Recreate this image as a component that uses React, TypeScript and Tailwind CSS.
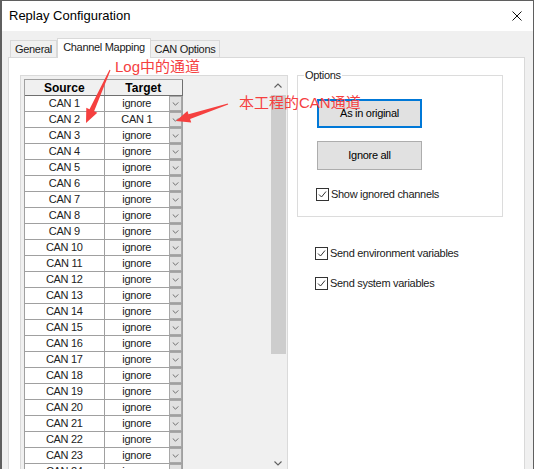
import React from "react";

const ui = { fontFamily: '"Liberation Sans", Arial, sans-serif' };
const cjk = { fontFamily: '"Liberation Sans", "Noto Sans CJK SC", sans-serif' };

const channels = Array.from({ length: 25 }, (_, i) => `CAN ${i + 1}`);

function Chevron({ up = false, className = "" }: { up?: boolean; className?: string }) {
  return (
    <svg viewBox="0 0 8 5" className={className} fill="none">
      <polyline
        points={up ? "0.5,4.5 4,1 7.5,4.5" : "0.5,0.5 4,4 7.5,0.5"}
        stroke="currentColor"
        strokeWidth="1.1"
      />
    </svg>
  );
}

function CheckBox({ label }: { label: string }) {
  return (
    <label className="flex items-center gap-[2px] text-[11px] leading-[13px] tracking-[-0.3px] text-[#1a1a1a]">
      <span className="w-[13px] h-[13px] border border-[#333] bg-white flex items-center justify-center">
        <svg viewBox="0 0 11 11" className="w-[11px] h-[11px]" fill="none">
          <polyline points="2,5.5 4.5,8 9,2.5" stroke="#333" strokeWidth="1" />
        </svg>
      </span>
      {label}
    </label>
  );
}

function Grid() {
  return (
    <div className="w-[159px] border-l border-t border-[#a0a0a0] text-[11px] tracking-[-0.3px] text-[#222]">
      <div className="flex h-[16px] bg-[#f0f0f0] font-bold text-[12px] tracking-normal text-black border-b border-[#6f6f6f]">
        <div className="w-[80px] flex items-center justify-center border-r border-[#a0a0a0]">Source</div>
        <div className="w-[79px] flex items-center justify-center border-r border-[#6f6f6f]">Target</div>
      </div>
      {channels.map((c, i) => (
        <div key={c} className="flex h-[16px] border-b border-[#a0a0a0] bg-white">
          <div className="w-[80px] flex items-center justify-center border-r border-[#a0a0a0]">{c}</div>
          <div className="w-[79px] flex items-center border-r border-[#a0a0a0]">
            <span className="flex-1 text-center">{i === 1 ? "CAN 1" : "ignore"}</span>
            <span className="w-[13px] h-[15px] bg-[#e1e1e1] border border-[#a8a8a8] flex items-center justify-center text-[#606060]">
              <Chevron className="w-[7px] h-[4px]" />
            </span>
          </div>
        </div>
      ))}
    </div>
  );
}

export default function App() {
  return (
    <div className="relative w-[535px] h-[469px] overflow-hidden bg-white" style={ui}>
      <div className="w-[534px] h-[469px] border-l-2 border-t border-r border-[#5f5f5f] flex flex-col bg-[#f0f0f0]">
        {/* title bar */}
        <div className="h-[30px] bg-white flex items-center justify-between pl-[7px] pr-[11px] shrink-0">
          <span className="text-[13px] text-black">Replay Configuration</span>
          <svg viewBox="0 0 10 10" className="w-[10px] h-[10px]" fill="none">
            <path d="M0.5 0.5 L9.5 9.5 M9.5 0.5 L0.5 9.5" stroke="#111" strokeWidth="1" />
          </svg>
        </div>

        {/* tabs */}
        <div className="flex items-end h-[26px] pl-[8px] shrink-0 text-[11px] tracking-[-0.3px] text-[#1a1a1a]">
          <div className="w-[47px] h-[17px] flex items-center justify-center border border-b-0 border-[#d9d9d9] bg-[#f0f0f0]">
            General
          </div>
          <div className="w-[94px] h-[20px] -mb-px flex items-center justify-center border border-b-0 border-[#d9d9d9] bg-white relative z-10 pb-[2px]">
            Channel Mapping
          </div>
          <div className="w-[69px] h-[17px] flex items-center justify-center border border-b-0 border-l-0 border-[#d9d9d9] bg-[#f0f0f0]">
            CAN Options
          </div>
        </div>

        {/* page */}
        <div className="ml-[6px] w-[517px] flex-1 bg-white border border-[#d9d9d9] flex pt-[17px] pl-[11px]">
          {/* channel list panel */}
          <div className="w-[268px] h-[400px] bg-[#f0f0f0] border border-[#dadada] flex justify-between pl-[3px] pt-[3px] pr-px shrink-0">
            <div className="overflow-hidden">
              <Grid />
            </div>
            <div className="w-[16px] -mt-[3px] flex flex-col items-center text-[#606060]">
              <div className="h-[19px] flex items-center justify-center">
                <Chevron up className="w-[8px] h-[5px]" />
              </div>
              <div className="w-[15px] h-[259px] bg-[#cdcdcd]" />
              <div className="flex-1" />
              <div className="h-[16px] flex items-start justify-center pt-[3px]">
                <Chevron className="w-[8px] h-[5px]" />
              </div>
            </div>
          </div>

          {/* right column */}
          <div className="ml-[9px] flex flex-col">
            <fieldset className="w-[206px] h-[148px] -mt-[6px] border border-[#dcdcdc]">
              <legend className="ml-[6px] px-px text-[11px] tracking-[-0.3px] leading-[13px] text-[#1a1a1a]">
                Options
              </legend>
              <div className="pl-[19px] flex flex-col items-start">
                <button className="mt-[17px] w-[105px] h-[29px] bg-[#e1e1e1] border-2 border-[#0078d7] text-[11px] tracking-[-0.3px] text-black">
                  As in original
                </button>
                <button className="mt-[13px] w-[105px] h-[29px] bg-[#e1e1e1] border border-[#adadad] text-[11px] tracking-[-0.3px] text-black">
                  Ignore all
                </button>
                <div className="mt-[18px] -ml-px">
                  <CheckBox label="Show ignored channels" />
                </div>
              </div>
            </fieldset>
            <div className="mt-[30px] pl-[18px] flex flex-col gap-[17px]">
              <CheckBox label="Send environment variables" />
              <CheckBox label="Send system variables" />
            </div>
          </div>
        </div>
      </div>

      {/* red annotations */}
      <span className="absolute left-[115px] top-[57px] text-[15px] text-[#f5403f] leading-[20px]" style={cjk}>
        Log中的通道
      </span>
      <span className="absolute left-[239px] top-[93px] text-[15px] text-[#f5403f] leading-[20px]" style={cjk}>
        本工程的CAN通道
      </span>
      <svg className="absolute inset-0 pointer-events-none" width="535" height="469" viewBox="0 0 535 469">
        <polygon
          points="110.5,70.2 94.1,111.2 97.3,112.7 86,123 86.3,107.7 89.5,109.2 109.5,69.8"
          fill="#f5403f"
        />
        <polygon
          points="228.2,104.5 190.1,119 191.2,122.4 176,121 187.4,110.9 188.5,114.3 227.8,103.5"
          fill="#f5403f"
        />
      </svg>
    </div>
  );
}
